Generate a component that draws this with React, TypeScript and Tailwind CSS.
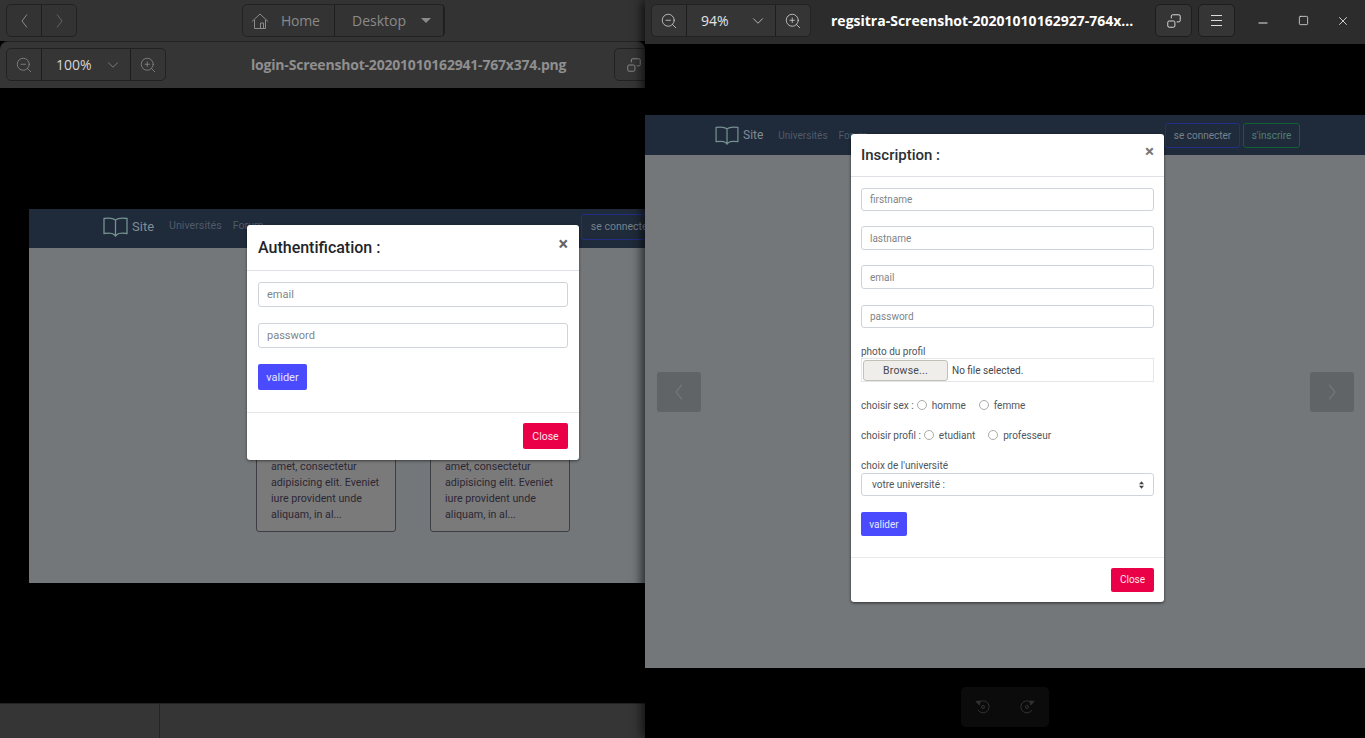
import { ChevronDown, Minus, Square, X, ZoomIn, ZoomOut } from "lucide-react";
import { ReactNode } from "react";

const RestoreIcon = () => (
  <svg width="16" height="16" viewBox="0 0 18 18" fill="none" stroke="currentColor" strokeWidth="1.100">
    <path d="M6 6V3.500A1.500 1.500 0 0 1 7.500 2h7A1.500 1.500 0 0 1 16 3.500v5a1.500 1.500 0 0 1-1.500 1.500H12" />
    <rect x="2" y="9" width="8" height="7" rx="1.500" />
  </svg>
);

const HomeIcon = () => (
  <svg width="18" height="18" viewBox="0 0 18 18" fill="none" stroke="currentColor" strokeWidth="1">
    <path d="M1 9.500 9 2l8 7.500M3.500 8v8.500h11V8M9.500 16.500V11h3v5.500" />
  </svg>
);

const BookIcon = ({ w, h }: { w: number; h: number }) => (
  <svg width={w} height={h} viewBox="0 0 25 20" fill="none" stroke="#75918f" strokeWidth="1.300">
    <path d="M12.500 3C10 1 5 1 1 1.500v15c4-.5 8.500-.5 10 1l1.500 1.500 1.500-1.500c1.500-1.500 6-1.500 10-1V1.500C20 1 15 1 12.500 3Zm0 0v15" />
  </svg>
);

const RotateIcon = ({ flip }: { flip?: boolean }) => (
  <svg width="16" height="16" viewBox="0 0 16 16" fill="none" stroke="#333" strokeWidth="1" className={flip ? "-scale-x-100" : ""}>
    <path d="M4 3.500A6 6 0 1 1 3 11" />
    <path d="M1 2.500 5 2 4.500 6Z" fill="#333" />
    <circle cx="8" cy="8" r="1.500" />
  </svg>
);

// tall narrow chevron used by the viewer's back/forward and carousel buttons
const ThinChevron = ({ right, size = 14 }: { right?: boolean; size?: number }) => (
  <svg width={size / 2} height={size} viewBox="0 0 7 14" fill="none" stroke="currentColor" strokeWidth="1">
    <path d={right ? "M1 0.500 6 7l-5 6.500" : "M6 0.500 1 7l5 6.500"} />
  </svg>
);

const SelectArrows = () => (
  <svg width="5" height="8" viewBox="0 0 6 9" fill="#444">
    <path d="M3 0 6 3.500H0ZM3 9 0 5.500h6Z" />
  </svg>
);

const ToolButton = ({ children, className = "" }: { children: ReactNode; className?: string }) => (
  <div className={`flex items-center justify-center border-[#1d1d1d] ${className}`}>{children}</div>
);

const ZoomGroup = ({ label, dark }: { label: string; dark?: boolean }) => (
  <div className={`flex h-[33px] w-[160px] shrink-0 rounded-[5px] border border-[#222] bg-[#353535] ${dark ? "text-[#dcdcdc]" : "text-[#8f8f8f]"}`}>
    <ToolButton className="w-[35px] border-r">
      <ZoomOut size={18} strokeWidth={1} />
    </ToolButton>
    <div className="flex w-[89px] items-center justify-between border-r border-[#1d1d1d] pl-[14px] pr-[8px]">
      <span className={`font-['Open_Sans',sans-serif] text-[14px] ${dark ? "text-[#e4e4e4]" : "text-[#d5d5d5]"}`}>{label}</span>
      <ChevronDown size={18} strokeWidth={1} />
    </div>
    <ToolButton className="flex-1">
      <ZoomIn size={18} strokeWidth={1} />
    </ToolButton>
  </div>
);

const NavBar = ({ compact }: { compact?: boolean }) => (
  <div className={`flex shrink-0 items-center bg-[#1f2a3a] ${compact ? "h-[40px] pl-[70px]" : "h-[39px] pb-[4px] pl-[74px]"}`}>
    <BookIcon w={compact ? 24 : 25} h={compact ? 19 : 20} />
    <span className={`ml-[4px] font-['Roboto',sans-serif] text-[#7f8d96] ${compact ? "text-[12px]" : "text-[13px]"}`}>Site</span>
    <span className={`ml-[15px] font-['Roboto',sans-serif] text-[#4f5b68] ${compact ? "text-[10px]" : "text-[10.700px]"}`}>Universités</span>
    <span className={`ml-[11px] font-['Roboto',sans-serif] text-[#4f5b68] ${compact ? "text-[10px]" : "text-[10.700px]"}`}>Forum</span>
    <div className="flex-1" />
    <div className={`flex items-center justify-center rounded-[3px] border border-[#222f85] font-['Roboto',sans-serif] text-[#77828c] ${compact ? "h-[25px] w-[75px] text-[10px]" : "mr-[135px] h-[26px] w-[80px] shrink-0 text-[10.500px]"}`}>
      se connecter
    </div>
    {compact && (
      <div className="ml-[3px] mr-[65px] flex h-[25px] w-[57px] items-center justify-center rounded-[3px] border border-[#0e6137] font-['Roboto',sans-serif] text-[10px] text-[#4f8078]">
        s'inscrire
      </div>
    )}
  </div>
);

const Field = ({ text, h, className = "" }: { text: string; h: number; className?: string }) => (
  <div
    className={`flex items-center rounded-[3px] border border-[#ced4da] bg-white pl-[8px] text-[#808589] ${className}`}
    style={{ height: h }}
  >
    {text}
  </div>
);

const Card = () => (
  <div className="flex h-[110px] w-[140px] flex-col justify-end rounded-[3px] border border-[#3b3f45] bg-[#7a7a7b] pb-[8px] pl-[14px] font-['Roboto',sans-serif] text-[10.700px] leading-[16px] text-[#2c2733]">
    <div>amet, consectetur</div>
    <div>adipisicing elit. Eveniet</div>
    <div>iure provident unde</div>
    <div>aliquam, in al...</div>
  </div>
);

const Radio = ({ label }: { label: string }) => (
  <span className="flex items-center">
    <span className="h-[10px] w-[10px] rounded-full border border-[#ababab] bg-white" />
    <span className="ml-[5px]">{label}</span>
  </span>
);

const LoginModal = () => (
  <div className="absolute left-[218px] top-[16px] w-[332px] rounded-[3px] bg-white font-['Roboto',sans-serif] shadow-[0_1px_3px_rgba(0,0,0,0.5)]">
    <div className="flex h-[46px] items-center justify-between border-b border-[#dee2e6] px-[11px]">
      <span className="text-[16px] font-medium text-[#212529]">Authentification :</span>
      <span className="mb-[8px] text-[18px] font-bold leading-none text-[#666]">×</span>
    </div>
    <div className="flex h-[142px] flex-col border-b border-[#e4e6e8] px-[11px] pt-[11px] text-[11px]">
      <Field text="email" h={25} className="pt-[1px]" />
      <Field text="password" h={25} className="mt-[16px] pt-[1px]" />
      <div className="mt-[16px] flex h-[26px] w-[49px] items-center justify-center rounded-[2px] bg-[#4a4aff] pt-[2px] text-[#e4e6ff]">valider</div>
    </div>
    <div className="flex h-[47px] items-center justify-end px-[11px] pb-[1px]">
      <div className="flex h-[26px] w-[45px] items-center justify-center rounded-[2px] bg-[#e90046] pt-[1px] text-[10.500px] text-[#ffe3ea]">Close</div>
    </div>
  </div>
);

const RegisterModal = () => (
  <div className="absolute left-[206px] top-[19px] w-[313px] rounded-[3px] bg-white font-['Roboto',sans-serif] shadow-[0_1px_3px_rgba(0,0,0,0.6)]">
    <div className="flex h-[43px] items-center justify-between border-b border-[#dee2e6] px-[10px]">
      <span className="text-[15px] font-medium text-[#2b2f33]">Inscription :</span>
      <span className="mb-[8px] text-[17px] font-bold leading-none text-[#777]">×</span>
    </div>
    <div className="flex h-[381px] flex-col border-b border-[#e9eaec] px-[10px] pt-[11px] text-[10px] text-[#50565c]">
      <Field text="firstname" h={23} />
      <Field text="lastname" h={24} className="mt-[15px]" />
      <Field text="email" h={24} className="mt-[15px]" />
      <Field text="password" h={23} className="mt-[16px]" />
      <div className="mt-[18px] leading-[12px]">photo du profil</div>
      <div className="flex h-[24px] items-center border border-[#e4e7ea] pl-[1px]">
        <div className="flex h-[21px] w-[85px] items-center justify-center rounded-[3px] border border-[#c4c0b8] bg-[#f0eeeb] pt-[1px] text-[10.500px] tracking-[0.2px] text-[#45494d]">Browse...</div>
        <span className="ml-[4px] text-[#45494d]">No file selected.</span>
      </div>
      <div className="mt-[17px] flex h-[12px] items-center">
        <span className="mr-[3px]">choisir sex :</span>
        <Radio label="homme" />
        <span className="w-[13px]" />
        <Radio label="femme" />
      </div>
      <div className="mt-[18px] flex h-[12px] items-center">
        <span className="mr-[3px]">choisir profil :</span>
        <Radio label="etudiant" />
        <span className="w-[13px]" />
        <Radio label="professeur" />
      </div>
      <div className="mt-[19px] leading-[12px]">choix de l'université</div>
      <div className="mt-[1px] flex h-[23px] items-center justify-between rounded-[3px] border border-[#ced4da] pl-[10px] pr-[9px]">
        <span>votre université :</span>
        <SelectArrows />
      </div>
      <div className="mt-[16px] flex h-[24px] w-[46px] items-center justify-center rounded-[2px] bg-[#4a4aff] text-[#e4e6ff]">valider</div>
    </div>
    <div className="flex h-[44px] items-center justify-end px-[10px] pb-[1px]">
      <div className="flex h-[24px] w-[43px] items-center justify-center rounded-[2px] bg-[#e90046] text-[10px] text-[#ffe3ea]">Close</div>
    </div>
  </div>
);

const LeftWindow = () => (
  <div className="absolute left-0 top-0 flex h-[738px] w-[645px] flex-col overflow-hidden bg-black">
    <div className="flex h-[41px] shrink-0 items-center bg-[#333333] pl-[6px] text-[#8a8a8a]">
      <div className="flex h-[33px] w-[71px] shrink-0 rounded-[5px] border border-[#222]">
        <ToolButton className="w-[35px] border-r">
          <ThinChevron />
        </ToolButton>
        <ToolButton className="flex-1 text-[#666]">
          <ThinChevron right />
        </ToolButton>
      </div>
      <div className="ml-[165px] flex h-[33px] w-[203px] shrink-0 rounded-[5px] border border-[#222] font-['Open_Sans',sans-serif] text-[14px]">
        <div className="flex w-[92px] items-center gap-[12px] border-r border-[#1d1d1d] pl-[8px]">
          <HomeIcon />
          <span className="tracking-[-0.2px]">Home</span>
        </div>
        <div className="flex flex-1 items-center border-r border-[#1d1d1d] pl-[17px]">
          <span>Desktop</span>
          <span className="ml-[15px] h-0 w-0 border-x-[5px] border-t-[5px] border-x-transparent border-t-[#8a8a8a]" />
        </div>
      </div>
    </div>
    <div className="flex h-[48px] shrink-0 items-center rounded-t-[8px] border-y border-t-[#222] border-b-black bg-[#353535] pb-[1px] pl-[6px]">
      <ZoomGroup label="100%" />
      <span className="ml-[85px] w-[323px] shrink-0 whitespace-nowrap font-['Open_Sans',sans-serif] text-[14px] font-bold tracking-[-0.2px] text-[#8f8f8f]">login-Screenshot-20201010162941-767x374.png</span>
      <div className="ml-[40px] flex h-[33px] w-[40px] shrink-0 items-center justify-center rounded-[5px] border border-[#222] text-[#8a8a8a]">
        <RestoreIcon />
      </div>
    </div>
    <div className="flex-1 pl-[29px] pt-[120px]">
      <div className="relative flex h-[374px] w-[767px] flex-col bg-[#73777a]">
        <NavBar />
        <div className="flex flex-1 items-end gap-[34px] pb-[51px] pl-[227px]">
          <Card />
          <Card />
        </div>
        <LoginModal />
      </div>
    </div>
    <div className="flex h-[35px] shrink-0 border-t border-[#222] bg-[#353535]">
      <div className="w-[160px] border-r border-[#252525]" />
    </div>
  </div>
);

const RightWindow = () => (
  <div className="absolute left-[645px] top-0 flex h-[738px] w-[720px] flex-col overflow-hidden bg-black shadow-[-3px_0_10px_rgba(0,0,0,0.7)]">
    <div className="flex h-[44px] shrink-0 items-center bg-[#2c2c2c] pb-[3px] pl-[6px]">
      <ZoomGroup label="94%" dark />
      <span className="ml-[20px] w-[304px] shrink-0 whitespace-nowrap font-['Open_Sans',sans-serif] text-[14px] font-bold text-white">regsitra-Screenshot-20201010162927-764x...</span>
      <div className="ml-[20px] flex h-[33px] w-[37px] shrink-0 items-center justify-center rounded-[5px] border border-[#1d1d1d] bg-[#353535] text-[#dcdcdc]">
        <RestoreIcon />
      </div>
      <div className="ml-[6px] flex h-[33px] w-[37px] shrink-0 flex-col items-center justify-center gap-[4px] rounded-[5px] border border-[#1d1d1d] bg-[#353535]">
        <span className="h-px w-[11px] bg-[#dcdcdc]" />
        <span className="h-px w-[11px] bg-[#dcdcdc]" />
        <span className="h-px w-[11px] bg-[#dcdcdc]" />
      </div>
      <div className="ml-[21px] flex w-[94px] items-center justify-between text-[#e4e4e4]">
        <Minus size={14} strokeWidth={1.700} className="mt-[4px]" />
        <Square size={11} strokeWidth={1.700} />
        <X size={14} strokeWidth={1.500} />
      </div>
    </div>
    <div className="flex-1 pt-[71px]">
      <div className="relative flex h-[553px] flex-col bg-[#73777a]">
        <NavBar compact />
        <div className="flex flex-1 items-center justify-between pb-[39px] pl-[12px] pr-[11px]">
          <div className="flex h-[40px] w-[44px] items-center justify-center rounded-[3px] bg-[#606467] text-[#74797c]">
            <ThinChevron size={16} />
          </div>
          <div className="flex h-[40px] w-[44px] items-center justify-center rounded-[3px] bg-[#606467] text-[#74797c]">
            <ThinChevron right size={16} />
          </div>
        </div>
        <RegisterModal />
      </div>
    </div>
    <div className="flex h-[70px] shrink-0 justify-center pt-[19px]">
      <div className="flex h-[40px] w-[88px] items-center justify-center gap-[28px] rounded-[5px] bg-[#0b0b0b]">
        <RotateIcon />
        <RotateIcon flip />
      </div>
    </div>
  </div>
);

export default function App() {
  return (
    <div className="relative h-[738px] w-[1365px] overflow-hidden bg-black">
      <LeftWindow />
      <RightWindow />
    </div>
  );
}
